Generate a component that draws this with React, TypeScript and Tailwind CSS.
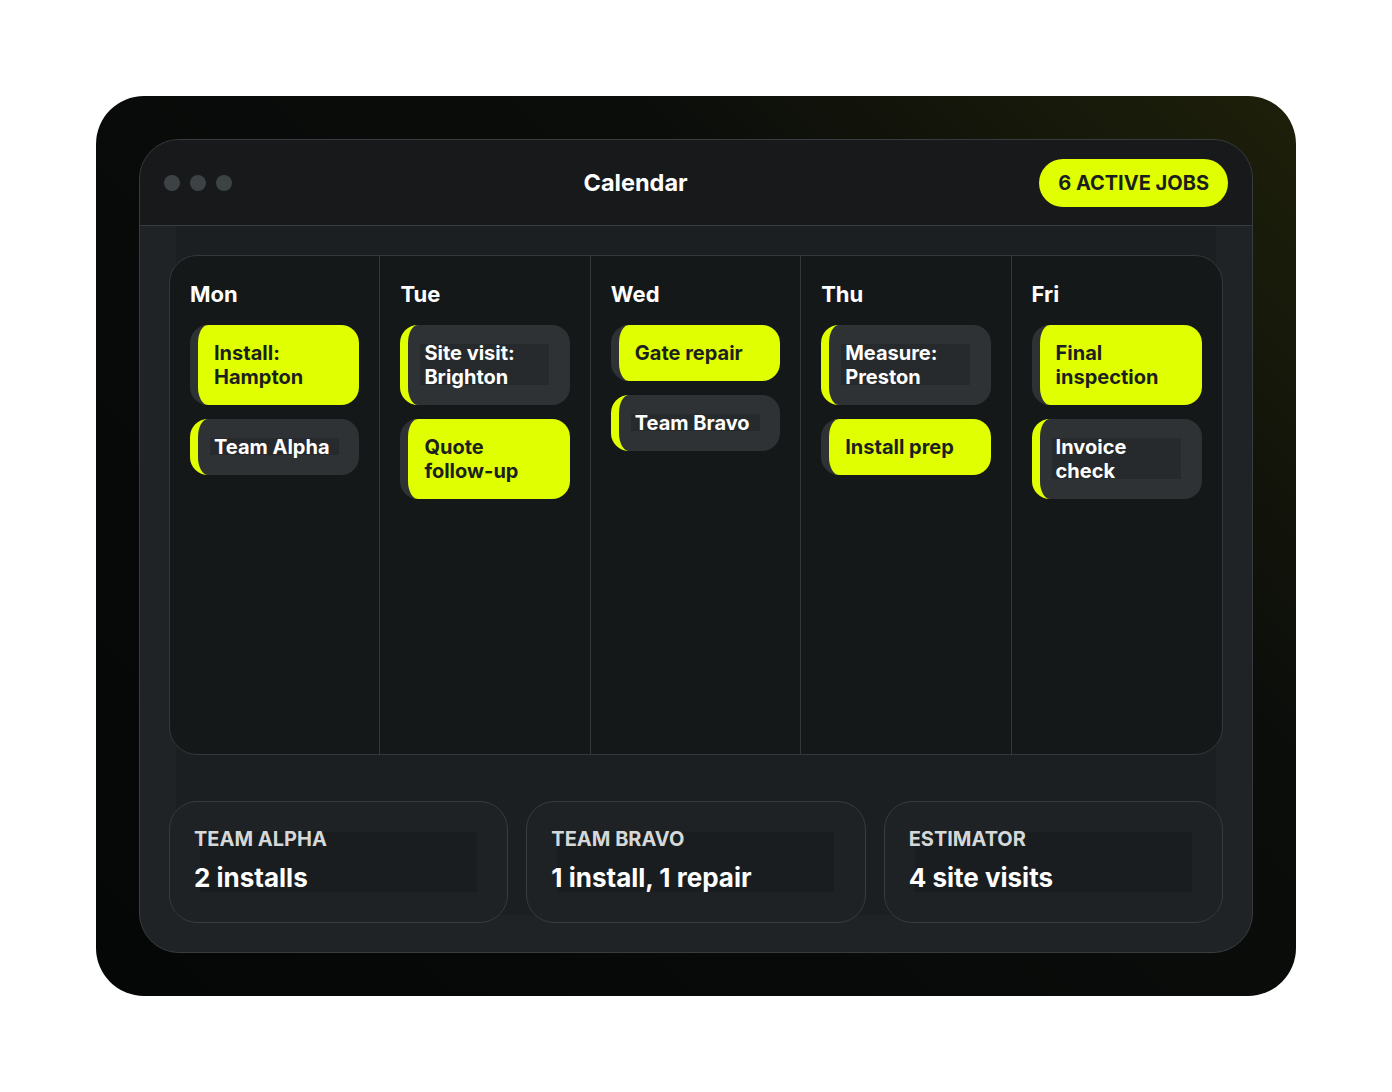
import type { ReactNode } from 'react'

type Job = {
  lines: string[]
  lime: boolean
}

const days: { name: string; jobs: Job[] }[] = [
  {
    name: 'Mon',
    jobs: [
      { lines: ['Install:', 'Hampton'], lime: true },
      { lines: ['Team Alpha'], lime: false },
    ],
  },
  {
    name: 'Tue',
    jobs: [
      { lines: ['Site visit:', 'Brighton'], lime: false },
      { lines: ['Quote', 'follow-up'], lime: true },
    ],
  },
  {
    name: 'Wed',
    jobs: [
      { lines: ['Gate repair'], lime: true },
      { lines: ['Team Bravo'], lime: false },
    ],
  },
  {
    name: 'Thu',
    jobs: [
      { lines: ['Measure:', 'Preston'], lime: false },
      { lines: ['Install prep'], lime: true },
    ],
  },
  {
    name: 'Fri',
    jobs: [
      { lines: ['Final', 'inspection'], lime: true },
      { lines: ['Invoice', 'check'], lime: false },
    ],
  },
]

const teams = [
  { label: 'Team Alpha', value: '2 installs' },
  { label: 'Team Bravo', value: '1 install, 1 repair' },
  { label: 'Estimator', value: '4 site visits' },
]

export default function App() {
  return (
    <div
      className="min-h-screen w-full bg-white flex items-center justify-center"
      style={{ fontFamily: 'Inter, "Noto Sans", sans-serif' }}
    >
      <div className="w-[1200px] h-[900px] rounded-[48px] p-[43px] bg-[linear-gradient(225deg,#1e200a_0%,#0b0d0b_32%,#050707_100%)]">
        <div className="h-full w-full rounded-[40px] border border-[#393c3f] bg-[#202325] overflow-hidden flex flex-col">
          {/* top bar */}
          <header className="h-[86px] shrink-0 bg-[#17191b] border-b border-[#393c3f] px-6 pt-px flex items-center justify-between">
            <div className="flex items-center gap-[10px]">
              <span className="w-4 h-4 rounded-full bg-[#3d4345]" />
              <span className="w-4 h-4 rounded-full bg-[#3d4345]" />
              <span className="w-4 h-4 rounded-full bg-[#3d4345]" />
            </div>
            <h1 className="text-[23.5px] leading-8 font-bold text-white">Calendar</h1>
            <div className="h-12 px-[19px] rounded-full bg-[#e0ff00] flex items-center text-[20px] font-bold text-[#1b1e1e]">
              6 ACTIVE JOBS
            </div>
          </header>

          <div className="flex-1 px-9">
            <div className="h-[689px] bg-[#1c1f21]">
              <div className="-mx-[7px] pt-[29px]">
                <div className="h-[500px] grid grid-cols-5 rounded-[28px] border border-[#34383b] bg-[#151819] overflow-hidden">
                  {days.map((d, i) => (
                    <div
                      key={d.name}
                      className={`px-5 pt-6 ${i < days.length - 1 ? 'border-r border-[#34383b]' : ''}`}
                    >
                      <p className="text-[22px] leading-7 font-bold text-white mb-[17px]">{d.name}</p>
                      <div className="flex flex-col gap-[14px]">
                        {d.jobs.map((j) => (
                          <JobCard key={j.lines.join(' ')} job={j} />
                        ))}
                      </div>
                    </div>
                  ))}
                </div>

                <div className="mt-[46px] grid grid-cols-3 gap-[18px]">
                  {teams.map((t) => (
                    <div
                      key={t.label}
                      className="h-[122px] rounded-[28px] border border-[#393c3f] bg-[#1f2224] px-6 pt-[25px]"
                    >
                      <TextBox rect="absolute left-[6px] top-[5px] bottom-[2px] w-[277px] bg-[#1a1d1f]">
                        <p className="text-[20px] leading-6 font-bold uppercase text-[#d4d8d8]">{t.label}</p>
                        <p className="mt-[11px] text-[26px] leading-8 font-bold text-white">{t.value}</p>
                      </TextBox>
                    </div>
                  ))}
                </div>
              </div>
            </div>
          </div>
        </div>
      </div>
    </div>
  )
}

function TextBox({ rect, children }: { rect: string; children: ReactNode }) {
  return (
    <div className="relative">
      <span className={rect} />
      <div className="relative">{children}</div>
    </div>
  )
}

function JobCard({ job }: { job: Job }) {
  const text = job.lines.map((l) => <span key={l} className="block whitespace-nowrap">{l}</span>)

  if (job.lime) {
    return (
      <div className="rounded-[18px] border-l-8 border-[#2e3235] bg-[#e0ff00] py-4 pl-4 pr-4 text-[20px] leading-6 font-bold text-[#1c1f1f]">
        {text}
      </div>
    )
  }

  return (
    <div className="rounded-[18px] border-l-8 border-[#e0ff00] bg-[#2e3235] py-4 pl-4 pr-4 text-[20px] leading-6 font-bold text-white">
      <TextBox rect="absolute -left-1 top-[3px] bottom-[4px] w-[129px] bg-[#262a2c]">{text}</TextBox>
    </div>
  )
}
